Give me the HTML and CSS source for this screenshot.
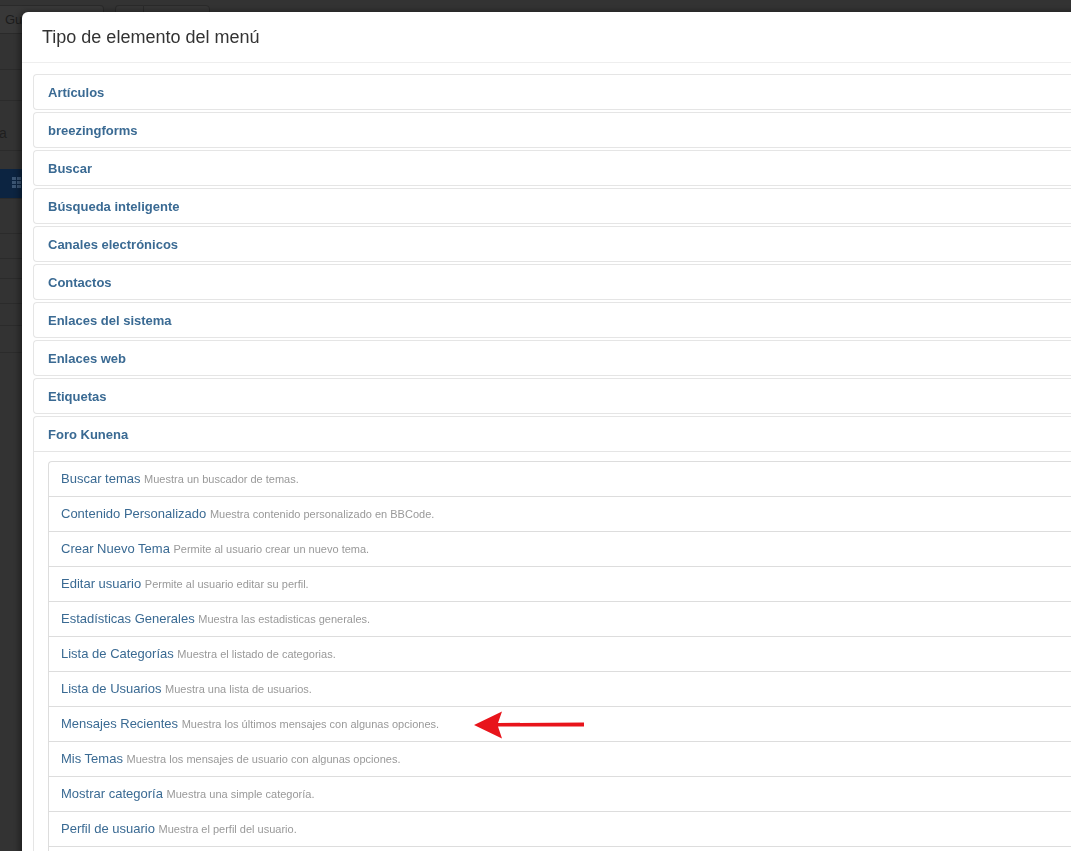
FILE: index.html
```html
<!DOCTYPE html>
<html lang="es">
<head>
  <meta charset="UTF-8">
  <meta name="viewport" content="width=device-width, initial-scale=1.0">
  <title>Tipo de elemento del menú</title>
  <link rel="stylesheet" href="styles.css">
</head>
<body>
  <div class="page">
    <div class="toolbar">
      <div class="fake-input">Guardar</div>
      <div class="btn-group">
        <div class="fake-btn small"></div>
        <div class="fake-btn"></div>
      </div>
    </div>
    <div class="row h36"></div>
    <div class="row h31"></div>
    <div class="row h50"><span class="dim-txt">a</span></div>
    <div class="spacer18"></div>
    <div class="blue-btn">
      <svg width="10" height="12" viewBox="0 0 10 12"><g fill="#3b5573"><rect x="0" y="0" width="4" height="3"/><rect x="5" y="0" width="4" height="3"/><rect x="0" y="4" width="4" height="3"/><rect x="5" y="4" width="4" height="3"/><rect x="0" y="8" width="4" height="3"/><rect x="5" y="8" width="4" height="3"/></g></svg>
    </div>
    <div class="row h36 top"></div>
    <div class="row h25"></div>
    <div class="row h20"></div>
    <div class="row h25"></div>
    <div class="row h22"></div>
    <div class="row h27"></div>
  </div>

  <div class="modal">
    <div class="modal-header">
      <h3>Tipo de elemento del menú</h3>
    </div>
    <div class="modal-body">
      <div class="accordion">
        <div class="acc-group"><a class="acc-toggle">Artículos</a></div>
        <div class="acc-group"><a class="acc-toggle">breezingforms</a></div>
        <div class="acc-group"><a class="acc-toggle">Buscar</a></div>
        <div class="acc-group"><a class="acc-toggle">Búsqueda inteligente</a></div>
        <div class="acc-group"><a class="acc-toggle">Canales electrónicos</a></div>
        <div class="acc-group"><a class="acc-toggle">Contactos</a></div>
        <div class="acc-group"><a class="acc-toggle">Enlaces del sistema</a></div>
        <div class="acc-group"><a class="acc-toggle">Enlaces web</a></div>
        <div class="acc-group"><a class="acc-toggle">Etiquetas</a></div>
        <div class="acc-group">
          <a class="acc-toggle">Foro Kunena</a>
          <div class="acc-inner">
            <ul class="stacked">
              <li><a>Buscar temas <small>Muestra un buscador de temas.</small></a></li>
              <li><a>Contenido Personalizado <small>Muestra contenido personalizado en BBCode.</small></a></li>
              <li><a>Crear Nuevo Tema <small>Permite al usuario crear un nuevo tema.</small></a></li>
              <li><a>Editar usuario <small>Permite al usuario editar su perfil.</small></a></li>
              <li><a>Estadísticas Generales <small>Muestra las estadisticas generales.</small></a></li>
              <li><a>Lista de Categorías <small>Muestra el listado de categorias.</small></a></li>
              <li><a>Lista de Usuarios <small>Muestra una lista de usuarios.</small></a></li>
              <li class="marked"><a>Mensajes Recientes <small>Muestra los últimos mensajes con algunas opciones.</small></a>
                <svg class="arrow" width="112" height="30" viewBox="0 0 112 30"><path d="M0 15 L28 1.5 L24 13 L110 12.5 L110 16.5 L24 16.5 L28 28.5 Z" fill="#e8141b"/></svg>
              </li>
              <li><a>Mis Temas <small>Muestra los mensajes de usuario con algunas opciones.</small></a></li>
              <li><a>Mostrar categoría <small>Muestra una simple categoría.</small></a></li>
              <li><a>Perfil de usuario <small>Muestra el perfil del usuario.</small></a></li>
              <li><a></a></li>
            </ul>
          </div>
        </div>
      </div>
    </div>
  </div>
</body>
</html>
```

FILE: styles.css
```css
*{padding:0;margin:0;box-sizing:border-box}
html,body{height:100%;overflow:hidden}
body {
  background: #333;
  font-family: "Liberation Sans", Arial, sans-serif;
  font-size: 13px;
  color: #333;
}

/* fondo */
.toolbar{
  height: 34px;
  padding-top: 5px;
  display: flex;
  gap: 11px;
  border-bottom: 1px solid #2a2a2a;
}
.fake-input{
  width: 104px;
  height: 29px;
  background: #383838;
  border: 1px solid #2a2a2a;
  border-left: none;
  border-radius: 0 4px 4px 0;
  color: #1c1c1c;
  font-size: 13px;
  line-height: 27px;
  padding-left: 5px;
  white-space: nowrap;
  overflow: hidden;
}
.btn-group{display:flex}
.fake-btn{
  width: 67px;
  height: 29px;
  background: #363636;
  border: 1px solid #2a2a2a;
  border-radius: 0 4px 4px 0;
}
.fake-btn.small{width:28px;border-radius:4px 0 0 4px;border-right:none}
.row{border-bottom:1px solid #2b2b2b}
.row.top{border-top:1px solid #2b2b2b}
.h36{height:36px}
.h31{height:31px}
.h50{height:50px}
.h25{height:25px}
.h20{height:20px}
.h22{height:22px}
.h27{height:27px}
.dim-txt{
  display:block;
  color:#1f1f1f;
  font-size:14px;
  padding-top:24px;
  margin-left:-1px;
}
.spacer18{height:18px}
.blue-btn{
  width: 30px;
  height: 29px;
  background: #0c2441;
  padding: 8px 0 0 12px;
}

/* modal */
.modal{
  position: fixed;
  top: 12px;
  left: 22px;
  width: 1100px;
  height: 900px;
  background: #fff;
  border-radius: 6px 0 0 0;
  box-shadow: -2px 0 6px rgba(0,0,0,0.45);
}
.modal-header{
  padding: 12px 20px 11px;
  border-bottom: 1px solid #eee;
}
.modal-header h3{
  font-size: 18px;
  line-height: 27px;
  font-weight: normal;
  color: #333;
}
.modal-body{
  padding: 11px 0 0 11px;
}
.acc-group{
  border: 1px solid #e5e5e5;
  border-right: none;
  border-radius: 4px 0 0 4px;
  margin-bottom: 2px;
}
.acc-toggle{
  display: block;
  padding: 9px 14px 7px;
  line-height: 18px;
  font-weight: bold;
  color: #3a6a93;
}
.acc-inner{
  border-top: 1px solid #e5e5e5;
  padding: 9px 0 0 14px;
}
.stacked{
  list-style: none;
}
.stacked li{
  position: relative;
}
.stacked a{
  display: block;
  min-height: 36px;
  padding: 8px 12px;
  line-height: 18px;
  border: 1px solid #ddd;
  border-right: none;
  margin-bottom: -1px;
  color: #3a6a93;
  font-size: 13px;
  white-space: nowrap;
}
.stacked li:first-child a{
  border-radius: 4px 0 0 0;
}
.stacked small{
  font-size: 11px;
  color: #999;
}
.arrow{
  position: absolute;
  left: 426px;
  top: 4px;
}
```
